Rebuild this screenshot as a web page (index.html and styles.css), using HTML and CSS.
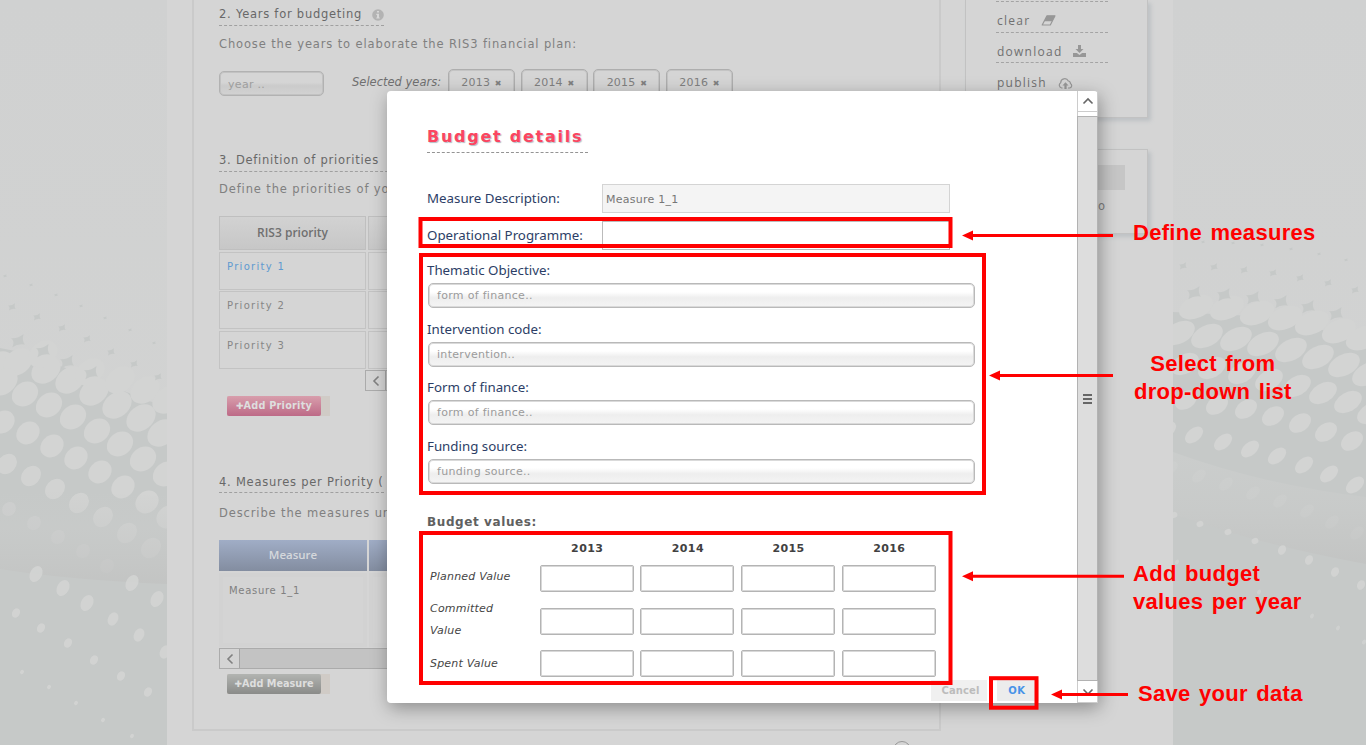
FILE: index.html
```html
<!DOCTYPE html>
<html lang="en">
<head>
<meta charset="utf-8">
<title>RIS3 budgeting</title>
<link rel="stylesheet" href="styles.css">
</head>
<body>
<div class="page">
  <svg class="backdrop" id="backdrop" width="1366" height="745" viewBox="0 0 1366 745">
    <defs>
      <linearGradient id="top" x1="0" y1="0" x2="0" y2="1"><stop offset="0" stop-color="#d0d1d1"/><stop offset="1" stop-color="#d3d4d3"/></linearGradient>
      <linearGradient id="band" x1="0" y1="0" x2="0" y2="1"><stop offset="0" stop-color="#c9cbca" stop-opacity="0"/><stop offset=".4" stop-color="#c9cbca" stop-opacity=".55"/><stop offset="1" stop-color="#c2c3c2" stop-opacity=".8"/></linearGradient>
      <linearGradient id="band2" x1="0" y1="0" x2="0" y2="1"><stop offset="0" stop-color="#cdcfce" stop-opacity=".7"/><stop offset=".5" stop-color="#c9cbca" stop-opacity=".7"/><stop offset="1" stop-color="#c2c3c2" stop-opacity=".8"/></linearGradient>
    </defs>
    <rect width="1366" height="745" fill="url(#top)"/>
    <path d="M0 348L30 354L167 408V745H0ZM1173 312L1290 318L1366 346V745H1173Z" fill="#c6c9c8"/>
    <g id="dots"></g>
    <path d="M0 490L167 496V584Q70 580 0 569Z" fill="url(#band)"/>
    <path d="M1173 452Q1260 484 1366 497V564Q1260 545 1173 514Z" fill="url(#band2)"/>
    <g id="lowdots"></g>
  </svg>

  <div class="sheet">
    <main class="main">
      <h2 class="step">2. Years for budgeting
        <svg class="info" width="12" height="12" viewBox="0 0 12 12"><circle cx="6" cy="6" r="5.8" fill="#b3b3b3"/><path d="M5 2h2v1.6H5zM4.3 4.8H7v3.7h.8v1.1H4.3V8.500H5V5.900h-.7z" fill="#d8d8d8"/></svg>
      </h2>
      <p class="lead">Choose the years to elaborate the RIS3 financial plan:</p>
      <div class="years">
        <div class="year-input">year ..</div>
        <em class="selected">Selected years:</em>
        <span class="tag">2013 <b>✖</b></span><span class="tag">2014 <b>✖</b></span><span class="tag">2015 <b>✖</b></span><span class="tag">2016 <b>✖</b></span>
      </div>

      <h2 class="step step-wide">3. Definition of priorities</h2>
      <p class="lead lead-tight">Define the priorities of your</p>
      <div class="priorities">
        <div class="head">RIS3 priority</div><div class="head"></div>
        <div class="cell link">Priority 1</div><div class="cell"></div>
        <div class="cell">Priority 2</div><div class="cell"></div>
        <div class="cell">Priority 3</div><div class="cell"></div>
      </div>
      <div class="scroll scroll-short"><span class="scroll-btn"><svg width="8" height="12" viewBox="0 0 8 12"><path d="M6.500 1.500L2 6l4.500 4.500" class="chev"/></svg></span></div>
      <div class="add"><span class="btn pink"><i>✚</i>Add Priority</span></div>

      <h2 class="step step-measures">4. Measures per Priority (</h2>
      <p class="lead lead-last">Describe the measures under</p>
      <div class="measures">
        <div class="mhead">Measure</div><div class="mhead"></div>
        <div class="mcell">Measure 1_1</div><div class="mcell"></div>
      </div>
      <div class="scroll"><span class="scroll-btn"><svg width="8" height="12" viewBox="0 0 8 12"><path d="M6.500 1.500L2 6l4.500 4.500" class="chev"/></svg></span></div>
      <div class="add add-measure"><span class="btn gray"><i>✚</i>Add Measure</span></div>
    </main>

    <aside class="side">
      <div class="card actions">
        <div class="action action-blank"></div>
        <div class="action"><span>clear</span>
          <svg width="15" height="11" viewBox="0 0 15 11"><path d="M6 .8h8L9.300 10H1.200z" fill="#d5d5d5" stroke="#979797" stroke-width="1.200" stroke-linejoin="round"/><path d="M6 .8h8L11.200 6.300H3.200z" fill="#979797"/></svg>
        </div>
        <div class="action"><span>download</span>
          <svg width="13" height="12" viewBox="0 0 13 12"><path d="M5 0h3v4h2.500L6.500 7.900 2.500 4H5zM0 8h3.900l2.600 2 2.600-2H13v4H0z" fill="#979797"/></svg>
        </div>
        <div class="action publish"><span>publish</span>
          <svg width="15" height="11" viewBox="0 0 15 11"><path d="M4.500 10H3.600A2.900 2.900 0 0 1 2.700 4.700 4 4 0 0 1 10.300 3a2.300 2.300 0 0 1 2.100 2.500A2.400 2.400 0 0 1 11.500 10H10" fill="none" stroke="#979797" stroke-width="1.200"/><path d="M7.500 4.200l3 3.200H8.600V11H6.400V7.400H4.500z" fill="#979797"/></svg>
        </div>
      </div>
      <div class="card info-card"><div class="bar"></div><div class="word">info</div></div>
    </aside>
    <div class="knob"></div>
  </div>

  <section class="modal">
    <div class="modal-body">
      <h1 class="title">Budget details</h1>
      <div class="field"><label>Measure Description:</label><div class="input disabled">Measure 1_1</div></div>
      <div class="field field-op"><label>Operational Programme:</label><div class="input"></div></div>
      <div class="pick"><label>Thematic Objective:</label><div class="select">form of finance..</div></div>
      <div class="pick"><label>Intervention code:</label><div class="select">intervention..</div></div>
      <div class="pick"><label>Form of finance:</label><div class="select">form of finance..</div></div>
      <div class="pick"><label>Funding source:</label><div class="select">funding source..</div></div>
      <h3 class="subtitle">Budget values:</h3>
      <div class="values">
        <span></span><b>2013</b><b>2014</b><b>2015</b><b>2016</b>
        <em>Planned Value</em><div class="box"></div><div class="box"></div><div class="box"></div><div class="box"></div>
        <em>Committed Value</em><div class="box"></div><div class="box"></div><div class="box"></div><div class="box"></div>
        <em>Spent Value</em><div class="box"></div><div class="box"></div><div class="box"></div><div class="box"></div>
      </div>
      <div class="buttons"><span class="cancel">Cancel</span><span class="ok">OK</span></div>
    </div>
    <div class="vscroll">
      <span class="vbtn"><svg width="12" height="8" viewBox="0 0 12 8"><path d="M1.500 6.500L6 2l4.500 4.500" class="vchev"/></svg></span>
      <div class="thumb"><i></i><i></i><i></i></div>
      <span class="vbtn"><svg width="12" height="8" viewBox="0 0 12 8"><path d="M1.500 1.500L6 6l4.500-4.500" class="vchev"/></svg></span>
    </div>
  </section>

  <svg class="marks" width="1366" height="745" viewBox="0 0 1366 745">
    <g fill="none" stroke="#f00" stroke-width="4">
      <rect x="420.500" y="219" width="530" height="27"/>
      <rect x="421" y="255" width="563" height="238"/>
      <rect x="421" y="533" width="529.500" height="150"/>
      <rect x="991" y="678.200" width="45.500" height="29.500"/>
    </g>
    <g fill="none" stroke="#f00" stroke-width="3">
      <path d="M970 235.500H1113M997 375.500H1113M970 576.300H1124M1059 694.500H1128"/>
    </g>
    <path d="M962 235.500l11-5v10zM989 375.500l11-5v10zM962 576.300l11-5v10zM1051 694.500l11-5v10z" fill="#f00"/>
  </svg>
  <div class="note note-measures">Define measures</div>
  <div class="note note-select">Select from<br>drop-down list</div>
  <div class="note note-budget">Add budget<br>values per year</div>
  <div class="note note-save">Save your data</div>
</div>
<script src="dots.js"></script>
</body>
</html>
```
FILE: styles.css
```css
* { box-sizing: border-box; }
body { margin: 0; background: #fff; overflow: hidden; font-family: "DejaVu Sans", sans-serif; font-size: 11.5px; color: #808080; }
h1, h2, h3, p { margin: 0; font-weight: normal; }
.page { position: relative; width: 1366px; height: 745px; overflow: hidden; }
.backdrop, .marks { position: absolute; left: 0; top: 0; }
.sheet { position: relative; margin-left: 167px; width: 1006px; height: 745px; background: #d5d5d5; display: flex; align-items: flex-start; }
.main { margin-left: 25px; width: 749px; height: 731px; border: 2px solid #cacaca; border-top: 0; padding-left: 25px; overflow: hidden; }

.step { width: 165px; height: 23px; margin-top: 3px; border-bottom: 1px dashed #a0a0a0; font-size: 11.5px; line-height: 22px; letter-spacing: .75px; color: #686868; white-space: nowrap; display: flex; justify-content: space-between; }
.info { margin-top: 6px; }
.lead { height: 35px; line-height: 36px; letter-spacing: .87px; white-space: nowrap; }
.years { display: flex; height: 28px; margin-top: 8px; align-items: flex-start; overflow: hidden; }
.year-input { width: 105px; height: 25px; margin: 2px 1px 0 0; border: 1px solid #b2b2b2; box-shadow: inset 0 0 0 1px #c2c2c2; border-radius: 5px; padding-left: 8px; line-height: 26px; color: #9e9e9e; background: linear-gradient(#d5d5d5 45%, #cbcbcb 60%, #d2d2d2); font-size: 11px; letter-spacing: .3px; }
.selected { width: 96px; margin-left: 27px; line-height: 27px; font-size: 11.5px; color: #707070; white-space: nowrap; }
.tag { width: 67px; height: 34px; margin-right: 5.700px; border: 1px solid #aeaeae; box-shadow: inset 0 0 0 1px #c4c4c4; border-radius: 5px; line-height: 25px; text-align: center; font-size: 11px; letter-spacing: .2px; color: #808080; white-space: nowrap; }
.tag b { font-size: 8px; margin-left: 1px; }
.step-wide { margin-top: 52px; width: 300px; }
.lead-tight { height: 44px; line-height: 35px; }
.priorities { display: grid; grid-template-columns: 147px 400px; grid-template-rows: 34px 38px 38px 38px; gap: 1.500px 2px; height: 153px; }
.head, .cell { border: 1px solid #c3c3c3; }
.head { background: linear-gradient(#d2d2d2, #c7c7c7); font: 600 12px/31px "Open Sans", sans-serif; text-align: center; color: #707070; border-color: #bfbfbf; }
.cell { padding: 8px 7px; font-size: 10px; line-height: 12px; letter-spacing: 1.3px; color: #868686; }
.link { color: #5f9ad0; }
.scroll { width: 700px; height: 21px; border: 1px solid #ababab; background: #c3c3c3; }
.scroll-short { margin: 1px 0 0 146px; }
.scroll-btn { display: flex; align-items: center; justify-content: center; width: 20px; height: 19px; background: #d4d4d4; border-right: 1px solid #a5a5a5; }
.chev { fill: none; stroke: #808080; stroke-width: 1.600; }
.add { width: 103px; height: 20px; margin: 5px 0 0 8px; background: #d0cbc6; }
.btn { display: block; width: 94px; height: 20px; border-radius: 2px; text-align: center; font-size: 9.7px; line-height: 20px; font-weight: bold; color: #dedede; letter-spacing: .25px; white-space: nowrap; }
.btn i { font-style: normal; font-size: 9px; letter-spacing: 0; }
.pink { background: linear-gradient(#d89eac, #bd6a87); }
.gray { background: linear-gradient(#b2b4b1, #8a8b89); letter-spacing: 0; }
.step-measures { margin-top: 54px; line-height: 24px; }
.lead-last { height: 47px; line-height: 41px; }
.measures { display: grid; grid-template-columns: 148px 400px; grid-template-rows: 31px 74px; gap: 2px; height: 108px; }
.mhead { background: linear-gradient(#a0adc6, #838da0); font: 600 11.500px/30px "Open Sans", sans-serif; color: #d5d8dc; text-align: center; }
.mcell { background: #d4d4d4; border: 4px solid #d2d2d2; padding: 8px 6px; font-size: 10px; line-height: 12px; letter-spacing: .7px; color: #808080; }
.add-measure { margin-top: 5px; }

.side { width: 183px; margin-left: 24px; }
.card { border: 1px solid #c2c2c2; box-shadow: 3px 3px 4px #bec2c5; }
.actions { height: 118px; border-top: 0; padding-left: 30px; }
.action { width: 112px; height: 30.500px; border-bottom: 1px dashed #a4a4a4; display: flex; gap: 13px; padding-left: 1px; font: 12px/38px "Open Sans", sans-serif; letter-spacing: 1.250px; color: #707070; }
.action svg { margin-top: 12px; }
.action-blank { height: 2px; }
.publish { border: 0; line-height: 40px; gap: 11px; }
.publish svg { margin-top: 15px; }
.action:nth-child(2) svg { margin-left: -2px; margin-top: 13px; }
.action:nth-child(3) svg { margin-left: -2px; }
.info-card { height: 85px; margin-top: 31px; padding: 15px 22px; }
.bar { height: 25px; background: #c6c6c6; }
.word { text-align: right; padding-right: 19px; line-height: 33px; letter-spacing: 1px; }
.knob { position: absolute; left: 726px; top: 741px; width: 18px; height: 18px; border: 1px solid #999; border-radius: 50%; }

.modal { position: absolute; left: 387px; top: 91px; width: 711px; height: 612px; background: #fff; border-radius: 4px; box-shadow: 2px 5px 18px rgba(0,0,0,.34); display: flex; }
.modal-body { width: 691px; padding: 31px 0 0 40px; color: #555; }
.title { width: 161px; height: 31px; border-bottom: 1px dashed #949494; font-size: 16px; line-height: 29px; font-weight: bold; letter-spacing: 1.750px; color: #fb4560; text-shadow: 1px 1px 1px #b4bcc4; white-space: nowrap; }
.field { display: flex; height: 29px; margin-top: 31px; }
label { font: 13.300px/29px "Noto Sans", sans-serif; color: #2c3e66; white-space: nowrap; }
.field label { width: 175px; }
.input { width: 348px; height: 29px; border: 1px solid #bbb; padding-left: 3px; font-size: 11px; line-height: 29px; letter-spacing: .25px; color: #777; }
.disabled { background: #f4f4f4; border-color: #d4d4d4; }
.field-op { margin-top: 8px; margin-bottom: 8px; }
.pick { height: 58.700px; }
.pick label { display: block; height: 25px; line-height: 24px; }
.select { width: 547px; height: 25px; margin-left: 1px; border: 1px solid #b9b9b9; box-shadow: inset 0 0 0 1px #dadada; border-radius: 5px; padding-left: 8px; font-size: 11px; line-height: 24px; letter-spacing: .3px; color: #9b9b9b; background: linear-gradient(#fff 35%, #eee 60%, #f4f4f4); }
.subtitle { height: 29px; margin-top: 15px; font-size: 12px; line-height: 29px; font-weight: bold; letter-spacing: .6px; color: #606060; }
.values { display: grid; grid-template-columns: 104px repeat(4, 94px); column-gap: 6.700px; grid-template-rows: 28px 43px 42px 42px; align-items: start; padding-left: 2px; height: 143px; }
.values b { text-align: center; font-size: 11px; line-height: 16px; padding: 4px 0 0 1px; letter-spacing: .4px; color: #414141; }
.values em { font-size: 11px; line-height: 23px; letter-spacing: .2px; padding-left: 1px; color: #454545; }
.values em:nth-of-type(2) { margin-top: -10px; width: 80px; line-height: 22px; }
.values em:nth-of-type(3) { line-height: 27px; }
.box { width: 94px; height: 27px; border: 1px solid #b4b4b4; box-shadow: inset 0 0 0 1px #d8d8d8; border-radius: 2px; }
.buttons { display: flex; height: 21px; margin-left: 504px; font-size: 10px; line-height: 22px; font-weight: bold; }
.cancel { width: 56px; padding-left: 3px; background: #f0f0f0; color: #bcbcbc; text-align: center; letter-spacing: .1px; }
.ok { width: 42px; margin-left: 10px; padding-right: 2px; background: #ececec; color: #4893e8; text-align: center; letter-spacing: .7px; }
.vscroll { width: 21px; height: 612px; border-left: 1px solid #ccc; border-right: 1px solid #ccc; display: flex; flex-direction: column; }
.vbtn { height: 21px; display: flex; align-items: center; justify-content: center; border-bottom: 1px solid #ccc; flex: none; }
.vchev { fill: none; stroke: #666; stroke-width: 1.600; }
.thumb { flex: 1; margin: 4px -1px 1px; border: 1px solid #b2b2b2; background: #ddd; display: flex; flex-direction: column; align-items: center; justify-content: center; gap: 2px; }
.thumb i { width: 9px; height: 2px; background: #666; }

.note { position: absolute; font: bold 22px/28px "Liberation Sans", Arial, sans-serif; letter-spacing: .3px; word-spacing: 2px; color: #f00; white-space: nowrap; }
.note-measures { left: 1133px; top: 219px; }
.note-select { left: 1134px; top: 350px; text-align: center; }
.note-budget { left: 1133px; top: 560px; }
.note-save { left: 1138px; top: 680px; }
```
FILE: dots.js
```js
// Halftone backdrop: each row is [rx, ry, angle, opacity, [x, y, x, y, ...]].
const NS = "http://www.w3.org/2000/svg";
const light = [
  [16, 12, -38, 1, [-1,365, 18,362, 46,370, 70,380, 3,382, 94,392, 117,405, 141,418, 162,433, 90,372, 120,380, 145,390, 167,400, 43,354]],
  [14, 11.5, -38, 1, [25,394, 49,405, 73,417, 97,431, 120,444, 143,459, 166,474]],
  [12.5, 10.5, -42, 1, [3,422, 28,433, 52,446, 76,458, 100,472, 123,487, 147,502, 168,517]],
  [11, 9, -48, .95, [7,464, 31,476, 55,489, 79,503, 103,517, 127,533, 151,548]],
  [18, 11, -24, 1, [1196,307, 1227,308, 1257,313, 1285,318, 1312,323, 1339,331, 1363,338]],
  [17, 10.5, -28, 1, [1179,333, 1207,336, 1236,339, 1263,344, 1291,350, 1318,357, 1344,365, 1368,374]],
  [15, 9.5, -30, 1, [1185,364, 1212,368, 1242,373, 1269,380, 1297,386, 1323,393, 1348,402, 1371,413]],
  [12, 8.5, -35, 1, [1186,400, 1217,405, 1246,409, 1273,416, 1300,423, 1326,432, 1352,441]],
  [10.5, 6.5, -40, 1, [1167,430, 1194,435, 1223,442, 1250,449, 1277,456, 1304,465, 1329,474, 1355,485]],
  [8, 5, -42, .7, [1171,468, 1199,476, 1226,484, 1253,493, 1280,501, 1307,511, 1332,522, 1357,533]],
  [7.500, 6.500, -50, .6, [9,509, 34,523, 58,537, 83,551, 107,566]]
];
const low = [
  [6, 8.5, 28, .9, [36,574, 63,588, 87,603, 132,583, 157,599]],
  [5, 7, 25, .9, [113,619, 139,635, 165,652]],
  [3.8, 5, 30, .9, [16,613, 41,628, 68,643, 94,660, 121,676, 148,692]],
  [1.8, 2.4, 30, .9, [22,672, 49,687, 76,703, 103,720, 132,736]],
  [3.5, 3, -20, .9, [1174,515, 1200,524, 1228,532, 1255,541]],
  [3.8, 5, 28, .9, [1282,550, 1309,560, 1335,572, 1361,585]],
  [1.8, 2.6, 30, .7, [1177,562, 1259,592, 1312,616, 1338,628, 1364,642]]
];
const dark = [
  [1.8, [5,276, 31,285, 56,295, 81,306, 105,318, 130,330, 154,343, 1203,242, 1233,243, 1262,245, 1291,249, 1319,254, 1346,260]],
  [3.8, [12,307, 37,317, 62,328, 87,339, 111,352, 134,364, 158,377, 1183,266, 1214,267, 1244,270, 1273,273, 1300,278, 1328,283, 1355,290]],
  [7, [18,341, 43,351, 67,362, 91,373, 1194,293, 1224,295, 1253,298, 1281,302, 1308,307, 1336,314]]
];
function add(parent, name, attrs) {
  const el = document.createElementNS(NS, name);
  for (const k in attrs) el.setAttribute(k, attrs[k]);
  document.getElementById(parent).appendChild(el);
}
function ellipses(parent, rows) {
  for (const [rx, ry, angle, opacity, p] of rows)
    for (let i = 0; i < p.length; i += 2)
      add(parent, "ellipse", { rx, ry, opacity, fill: "#d3d4d3", transform: `translate(${p[i]} ${p[i + 1]}) rotate(${angle})` });
}
ellipses("dots", light);
for (const [r, p] of dark)
  for (let i = 0; i < p.length; i += 2)
    add("dots", "path", { d: `M${-r} ${-r * .4}Q0 ${-r * .3} ${r * .8} ${-r}Q${r * .5} 0 ${r} ${r * .5}Q0 ${r * .3} ${-r * .8} ${r * .9}Q${-r * .4} 0 ${-r} ${-r * .4}Z`, fill: "#c6c9c8", transform: `translate(${p[i]} ${p[i + 1]})` });
ellipses("lowdots", low);
```
